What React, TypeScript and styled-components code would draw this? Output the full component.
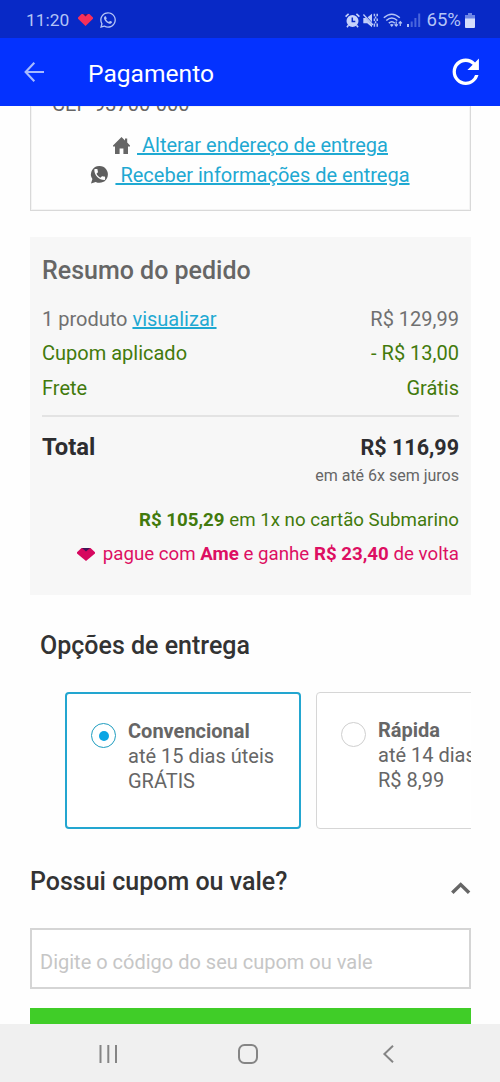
import React from "react";
import styled, { createGlobalStyle } from "styled-components";
import { FaWhatsapp } from "react-icons/fa";

const GlobalStyle = createGlobalStyle`
  * { box-sizing: border-box; }
  body { margin: 0; background: #fff; font-family: Roboto, "Liberation Sans", sans-serif; }
  h2, p { margin: 0; }
`;

const Screen = styled.div`
  width: 500px;
  height: 1082px;
  display: flex;
  flex-direction: column;
  overflow: hidden;
  background: #fefefe;
  color: #666;
  font-size: 20px;
`;

const StatusBar = styled.header`
  height: 38px;
  flex: none;
  display: flex;
  align-items: center;
  justify-content: space-between;
  padding: 2px 25px 0 26px;
  background: #0829c6;
  color: #b4c4f6;
`;

const StatusGroup = styled.div`
  display: flex;
  align-items: center;
`;

const StatusText = styled.span<{ $size: number }>`
  line-height: 22px;
  font-size: ${(p) => p.$size}px;
`;

const Glyph = styled.svg<{ $left?: number }>`
  display: block;
  flex: none;
  margin-left: ${(p) => p.$left ?? 0}px;
  overflow: visible;
`;

const WhatsStatus = styled(FaWhatsapp)`
  width: 18px;
  height: 18px;
  margin-left: 6px;
`;

const AppBar = styled.nav`
  height: 68px;
  flex: none;
  display: flex;
  align-items: center;
  padding: 0 15px 0 24px;
  background: #0432ff;
  color: #fff;
`;

const AppTitle = styled.h1`
  flex: 1;
  margin: 4px 0 0 44px;
  font-size: 24.6px;
  font-weight: 400;
  line-height: 32px;
`;

const Content = styled.main`
  flex: 1;
  min-height: 0;
  overflow: hidden;
  padding: 0 29px 0 30px;
`;

const AddressCard = styled.section`
  display: flow-root;
  height: 105px;
  border: 1px solid #d9d9d9;
  border-width: 0 1px 1px;
  box-shadow: inset 0 0 0 1px #f4f4f4;
`;

const ZipLine = styled.p`
  margin-top: -19px;
  padding-left: 21px;
  line-height: 34px;
`;

const AddressLinks = styled.div`
  padding-top: 9px;
`;

const LinkRow = styled.div`
  height: 30px;
  display: flex;
  align-items: center;
  justify-content: center;
  gap: 7px;
`;

const Link = styled.a`
  color: #1fa9d2;
  white-space: pre;
  line-height: 30px;
  text-decoration: underline;
  text-decoration-thickness: 1.5px;
`;

const Summary = styled.section`
  height: 358px;
  margin-top: 26px;
  padding: 16px 12px 0;
  background: #f7f7f7;
`;

const SummaryTitle = styled.h2`
  font-size: 25px;
  font-weight: 500;
  line-height: 36px;
`;

const SummaryRows = styled.div`
  margin-top: 13px;
  padding-bottom: 10px;
  border-bottom: 2px solid #e3e3e3;
`;

const Row = styled.div<{ $positive?: boolean }>`
  display: flex;
  justify-content: space-between;
  line-height: 34.4px;
  color: ${(p) => (p.$positive ? "#427a0c" : "#707070")};
`;

const TotalRow = styled.div`
  display: flex;
  justify-content: space-between;
  margin-top: 12px;
  line-height: 36px;
  font-size: 23.8px;
  font-weight: 700;
  color: #2d2d30;
`;

const TotalValue = styled.span`
  font-size: 21.5px;
  padding-top: 1px;
`;

const Installments = styled.p`
  font-size: 16px;
  line-height: 20px;
  text-align: right;
`;

const Offer = styled.p<{ $tone: "card" | "ame" }>`
  display: flex;
  align-items: center;
  justify-content: flex-end;
  gap: 3px;
  margin-top: ${(p) => (p.$tone === "card" ? 17 : 0)}px;
  line-height: 34px;
  white-space: pre;
  color: ${(p) => (p.$tone === "card" ? "#427a0c" : "#dd0f62")};
`;

const OfferText = styled.span`
  font-size: 18.72px;
  b { font-weight: 700; }
`;

const SectionTitle = styled.h2<{ $indent?: number }>`
  padding-left: ${(p) => p.$indent ?? 0}px;
  font-size: 25px;
  font-weight: 500;
  line-height: 36px;
  color: #333;
`;

const Delivery = styled.section`
  padding-top: 33px;
`;

const OptionStrip = styled.div`
  display: flex;
  gap: 15px;
  margin-top: 28px;
  padding-left: 35px;
  overflow: hidden;
`;

const OptionCard = styled.label<{ $selected?: boolean }>`
  flex: none;
  display: flex;
  width: 236px;
  height: 137px;
  gap: 12px;
  padding: 25px 24px;
  border: ${(p) => (p.$selected ? "2px solid #23a6d0" : "1px solid #d6d6d6")};
  border-radius: 4px;
  background: #fff;
`;

const Radio = styled.span<{ $selected?: boolean }>`
  flex: none;
  display: grid;
  place-items: center;
  width: 25px;
  height: 25px;
  margin-top: 4px;
  border: 1px solid ${(p) => (p.$selected ? "#1f9dbf" : "#cfcfcf")};
  border-radius: 50%;

  &::after {
    content: "";
    width: 10px;
    height: 10px;
    border-radius: 50%;
    background: ${(p) => (p.$selected ? "#0aa5e4" : "transparent")};
  }
`;

const OptionText = styled.span`
  display: flex;
  flex-direction: column;
  line-height: 25px;
  white-space: nowrap;
  b { font-weight: 700; }
`;

const Coupon = styled.section`
  padding-top: 35px;
`;

const CouponHeader = styled.div`
  display: flex;
  justify-content: space-between;
`;

const CouponInput = styled.input`
  display: block;
  width: 100%;
  height: 61px;
  margin-top: 28px;
  padding: 6px 8px 0;
  border: 2px solid #d5d5d5;
  background: #fff;
  font: 20px Roboto, "Liberation Sans", sans-serif;
  color: #333;

  &::placeholder { color: #c6c6c6; opacity: 1; }
`;

const ApplyButton = styled.button`
  display: block;
  width: 100%;
  height: 60px;
  margin-top: 19px;
  border: 0;
  background: #40cd28;
`;

const SystemNav = styled.footer`
  height: 58px;
  flex: none;
  display: flex;
  align-items: center;
  padding: 2px 0 0 99px;
  background: #f0f0f0;
`;

const PHONE =
  "M6.62 10.79c1.44 2.83 3.76 5.14 6.59 6.59l2.2-2.2c.27-.27.67-.36 1.02-.24 1.12.37 2.33.57 3.57.57.55 0 1 .45 1 1V20c0 .55-.45 1-1 1-9.39 0-17-7.61-17-17 0-.55.45-1 1-1h3.5c.55 0 1 .45 1 1 0 1.25.2 2.45.57 3.57.11.35.03.74-.25 1.02l-2.2 2.2z";

const HeartIcon = () => (
  <Glyph width="15" height="12" viewBox="0 0 15 12" $left={9}>
    <path d="M3.6 0H6l1.5 1.6L9 0h2.4L15 3.4v1.4L7.5 12 0 4.8V3.4z" fill="#f62f5a" />
    <path d="M5 0h5L7.5 2.6z" fill="#4a1466" />
  </Glyph>
);

const AlarmIcon = () => (
  <Glyph width="15" height="15" viewBox="0 0 15 15">
    <circle cx="7.5" cy="8" r="6" fill="#c6d2fa" />
    <path d="M.6 3.6 3.6.9M14.4 3.6 11.4.9M3.4 12.2 2 14.2M11.6 12.2l1.4 2" stroke="#c6d2fa" strokeWidth="1.6" />
    <path d="M7.3 4.6v3.8h3" fill="none" stroke="#0829c6" strokeWidth="1.5" />
  </Glyph>
);

const MuteVibrateIcon = () => (
  <Glyph width="15" height="15" viewBox="0 0 15 15" $left={3}>
    <path d="M4.600 4.300 9 .8v8.400zM.3 5h2.500L9 11.700v2.500L4.200 10.300H.3z" fill="#c0cdf9" />
    <path d="M.4 1.500 10 12" stroke="#c0cdf9" strokeWidth="1.300" />
    <path d="M11.400.8v2.400M12.600 3.400v2M11.400 5.600v2.400M12.600 8.200v2M11.400 10.400v3.400M14.200.8v2.400M14.200 5.600v2.400M14.200 10.400v3.400" stroke="#b4c4f6" strokeWidth="1.500" />
  </Glyph>
);

const WifiIcon = () => (
  <Glyph width="20" height="15" viewBox="0 0 20 15" $left={5} fill="none" stroke="#b4c4f6" strokeWidth="1.5">
    <path d="M.8 4.8q8-7.2 16 0M3.3 7.5q5.5-5 11 0M5.8 10.1q3-2.6 6 0" />
    <path d="m6.9 11.7 1.9 2.3 1.9-2.3q-1.9-1.2-3.8 0z" fill="#b4c4f6" stroke="none" />
    <path d="M13.2 8.5v4.4M11.6 11.3l1.6 1.8 1.6-1.8M17.3 13V8.8M15.7 10.4l1.6-1.8 1.6 1.8" strokeWidth="1.2" />
  </Glyph>
);

const SignalIcon = () => (
  <Glyph width="14" height="14" viewBox="0 0 14 14" $left={4}>
    <path d="M0 11h2v3H0z" fill="#b4c4f6" />
    <path d="M3.7 8.5h2V14h-2zM7.4 5h2v9h-2zM11.2.5h2V14h-2z" fill="#4a66dc" />
  </Glyph>
);

const BatteryIcon = () => (
  <Glyph width="10" height="15" viewBox="0 0 11 15" preserveAspectRatio="none" $left={4}>
    <path d="M3.3 0h4.4v2H11v4H0V2h3.3z" fill="#6d86e6" />
    <path d="M0 5.5h11V14a1 1 0 0 1-1 1H1a1 1 0 0 1-1-1z" fill="#d5defc" />
  </Glyph>
);

const BackIcon = () => (
  <Glyph width="20" height="20" viewBox="0 0 20 20" fill="none" stroke="#a6baff" strokeWidth="2.1">
    <path d="M10.3.8 1.6 10l8.700 9.200M1.4 10H20" />
  </Glyph>
);

const RefreshIcon = () => (
  <Glyph width="39.5" height="39.5" viewBox="0 0 24 24">
    <path fill="#fff" d="M17.65 6.35A7.96 7.96 0 0 0 12 4c-4.42 0-7.99 3.58-7.99 8s3.57 8 7.99 8c3.73 0 6.84-2.55 7.73-6h-2.08A5.99 5.99 0 0 1 12 18c-3.31 0-6-2.69-6-6s2.69-6 6-6c1.66 0 3.14.69 4.22 1.78L13 11h7V4l-2.35 2.35z" />
  </Glyph>
);

const HomeIcon = () => (
  <Glyph width="17" height="17" viewBox="0 0 17 17">
    <path d="M8.5 0 12 3.4V1.6h2.2v4L17 8.5v1h-2V17h-4.6v-5.6H6.6V17H2V9.5H0v-1z" fill="#666" />
  </Glyph>
);

const WhatsSolidIcon = () => (
  <Glyph width="17" height="18" viewBox="0 0 17 18">
    <path d="M8.6 0a8.400 8.400 0 1 1-3.900 15.900L0 17.500l1.400-4.400A8.400 8.400 0 0 1 8.600 0z" fill="#5f5f5f" />
    <path d={PHONE} transform="translate(1.500 1.300) scale(.6)" fill="#fff" />
  </Glyph>
);

const AmeIcon = () => (
  <Glyph width="18" height="13" viewBox="0 0 18 13">
    <path d="M4.500 0h9L18 4.200v1.400L9 13 0 5.600V4.200z" fill="#d6085f" />
    <path d="M5 0h8L9 3.400z" fill="#3f1458" />
  </Glyph>
);

const ChevronUp = () => (
  <Glyph width="20" height="36" viewBox="0 0 20 36">
    <path d="M1.300 28.800 9.700 20.600l8.400 8.200" fill="none" stroke="#666" strokeWidth="3.500" />
  </Glyph>
);

export default function App() {
  return (
    <>
      <GlobalStyle />
      <Screen>
        <StatusBar>
          <StatusGroup>
            <StatusText $size={17.4}>11:20</StatusText>
            <HeartIcon />
            <WhatsStatus />
          </StatusGroup>
          <StatusGroup>
            <AlarmIcon />
            <MuteVibrateIcon />
            <WifiIcon />
            <SignalIcon />
            <Glyph width="5" height="1" />
            <StatusText $size={18.6}>65%</StatusText>
            <BatteryIcon />
          </StatusGroup>
        </StatusBar>
        <AppBar>
          <BackIcon />
          <AppTitle>Pagamento</AppTitle>
          <RefreshIcon />
        </AppBar>
        <Content>
          <AddressCard>
            <ZipLine>CEP 93700-000</ZipLine>
            <AddressLinks>
              <LinkRow>
                <HomeIcon />
                <Link> Alterar endereço de entrega</Link>
              </LinkRow>
              <LinkRow>
                <WhatsSolidIcon />
                <Link> Receber informações de entrega</Link>
              </LinkRow>
            </AddressLinks>
          </AddressCard>
          <Summary>
            <SummaryTitle>Resumo do pedido</SummaryTitle>
            <SummaryRows>
              <Row>
                <span>1 produto <Link>visualizar</Link></span>
                <span>R$ 129,99</span>
              </Row>
              <Row $positive>
                <span>Cupom aplicado</span>
                <span>- R$ 13,00</span>
              </Row>
              <Row $positive>
                <span>Frete</span>
                <span>Grátis</span>
              </Row>
            </SummaryRows>
            <TotalRow>
              <span>Total</span>
              <TotalValue>R$ 116,99</TotalValue>
            </TotalRow>
            <Installments>em até 6x sem juros</Installments>
            <Offer $tone="card">
              <OfferText><b>R$ 105,29</b> em 1x no cartão Submarino</OfferText>
            </Offer>
            <Offer $tone="ame">
              <AmeIcon />
              <OfferText> pague com <b>Ame</b> e ganhe <b>R$ 23,40</b> de volta</OfferText>
            </Offer>
          </Summary>
          <Delivery>
            <SectionTitle $indent={10}>Opções de entrega</SectionTitle>
            <OptionStrip>
              <OptionCard $selected>
                <Radio $selected />
                <OptionText>
                  <b>Convencional</b>
                  <span>até 15 dias úteis</span>
                  <span>GRÁTIS</span>
                </OptionText>
              </OptionCard>
              <OptionCard>
                <Radio />
                <OptionText>
                  <b>Rápida</b>
                  <span>até 14 dias úteis</span>
                  <span>R$ 8,99</span>
                </OptionText>
              </OptionCard>
            </OptionStrip>
          </Delivery>
          <Coupon>
            <CouponHeader>
              <SectionTitle>Possui cupom ou vale?</SectionTitle>
              <ChevronUp />
            </CouponHeader>
            <CouponInput placeholder="Digite o código do seu cupom ou vale" />
            <ApplyButton aria-label="Aplicar" />
          </Coupon>
        </Content>
        <SystemNav>
          <Glyph width="18" height="18" viewBox="0 0 18 18">
            <path d="M1.500 0v18M9.300 0v18M17 0v18" stroke="#858585" strokeWidth="2" />
          </Glyph>
          <Glyph width="20" height="20" viewBox="0 0 20 20" $left={121}>
            <rect x="1" y="1" width="18" height="18" rx="5.500" fill="none" stroke="#858585" strokeWidth="2" />
          </Glyph>
          <Glyph width="11" height="18" viewBox="0 0 11 18" $left={125}>
            <path d="M10 .7 1.400 9l8.600 8.300" fill="none" stroke="#858585" strokeWidth="2" />
          </Glyph>
        </SystemNav>
      </Screen>
    </>
  );
}
